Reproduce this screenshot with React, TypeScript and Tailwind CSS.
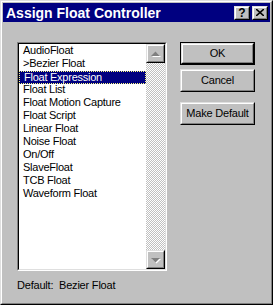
import { clsx as cx } from 'clsx'

const items = [
  'AudioFloat',
  '>Bezier Float',
  'Float Expression',
  'Float List',
  'Float Motion Capture',
  'Float Script',
  'Linear Float',
  'Noise Float',
  'On/Off',
  'SlaveFloat',
  'TCB Float',
  'Waveform Float',
]

const raisedOuter = 'border border-t-[#dfdfdf] border-l-[#dfdfdf] border-r-black border-b-black'
const raisedInner = 'border border-t-white border-l-white border-r-[#808080] border-b-[#808080]'

function Raised({ className, children }: { className?: string; children?: React.ReactNode }) {
  return (
    <div className={cx(raisedOuter, 'bg-[#c0c0c0]', className)}>
      <div className={cx(raisedInner, 'flex h-full w-full items-center justify-center')}>{children}</div>
    </div>
  )
}

function Arrow({ up }: { up?: boolean }) {
  // disabled arrow: grey triangle with a white shadow
  const d = up ? 'M3 7 L12 7 L7.5 2.5 Z' : 'M3 3 L12 3 L7.5 7.5 Z'
  return (
    <svg width="15" height="10" viewBox="0 0 15 10">
      <path d={d} transform="translate(1 1)" fill="#ffffff" />
      <path d={d} fill="#808080" />
    </svg>
  )
}

function Button({ label, isDefault }: { label: string; isDefault?: boolean }) {
  const inner = (
    <Raised className="h-full w-full">
      <span className="text-[11px] leading-none tracking-[-0.2px] text-black">{label}</span>
    </Raised>
  )
  return isDefault ? (
    <div className="h-[23px] w-[75px] border border-black">{inner}</div>
  ) : (
    <div className="h-[23px] w-[75px]">{inner}</div>
  )
}

export default function App() {
  return (
    <div className="h-[305px] w-[273px] bg-[#c0c0c0] font-['Liberation_Sans',Arial,sans-serif]">
      <div className={cx(raisedOuter, 'h-full w-full')}>
        <div className={cx(raisedInner, 'flex h-full w-full flex-col p-px')}>
          {/* title bar */}
          <div className="flex h-[19px] items-center bg-[#000080] pl-[3px] pr-[2px]">
            <span className="flex-1 text-[14px] font-bold leading-none text-white">Assign Float Controller</span>
            <Raised className="h-[14px] w-[16px]">
              <span className="text-[12px] font-bold leading-none text-black">?</span>
            </Raised>
            <Raised className="ml-[2px] h-[14px] w-[16px]">
              <svg width="8" height="7" viewBox="0 0 8 7">
                <path d="M0 0 L8 7 M8 0 L0 7" stroke="#000" strokeWidth="1.6" />
              </svg>
            </Raised>
          </div>

          <div className="flex flex-1 pl-[14px] pt-[20px]">
            <div className="flex flex-col">
              {/* list box */}
              <div className="h-[229px] w-[150px] border border-t-[#808080] border-l-[#808080] border-r-white border-b-white">
                <div className="flex h-full w-full border border-t-black border-l-black border-r-[#dfdfdf] border-b-[#dfdfdf] bg-white">
                  <div className="flex-1 pt-px">
                    {items.map((it, i) => (
                      <div
                        key={it}
                        className={cx(
                          'h-[13px] whitespace-nowrap pl-[4px] text-[11px] leading-[11px] tracking-[-0.25px]',
                          i === 2
                            ? 'border border-dotted border-[#ffff80] bg-[#000080] pl-[3px] text-white'
                            : 'text-black'
                        )}
                      >
                        {it}
                      </div>
                    ))}
                  </div>
                  {/* scrollbar */}
                  <div className="flex w-[19px] flex-col bg-[conic-gradient(#c0c0c0_25%,#ffffff_0_50%,#c0c0c0_0_75%,#ffffff_0)] bg-size-[2px_2px]">
                    <Raised className="h-[19px] w-[19px]">
                      <Arrow up />
                    </Raised>
                    <div className="flex-1" />
                    <Raised className="h-[19px] w-[19px]">
                      <Arrow />
                    </Raised>
                  </div>
                </div>
              </div>
              <div className="pt-[9px] text-[11px] leading-none tracking-[-0.2px] text-black">Default:&nbsp; Bezier Float</div>
            </div>

            <div className="ml-[13px] flex flex-col">
              <Button label="OK" isDefault />
              <div className="mt-[4px]">
                <Button label="Cancel" />
              </div>
              <div className="mt-[10px]">
                <Button label="Make Default" />
              </div>
            </div>
          </div>
        </div>
      </div>
    </div>
  )
}
